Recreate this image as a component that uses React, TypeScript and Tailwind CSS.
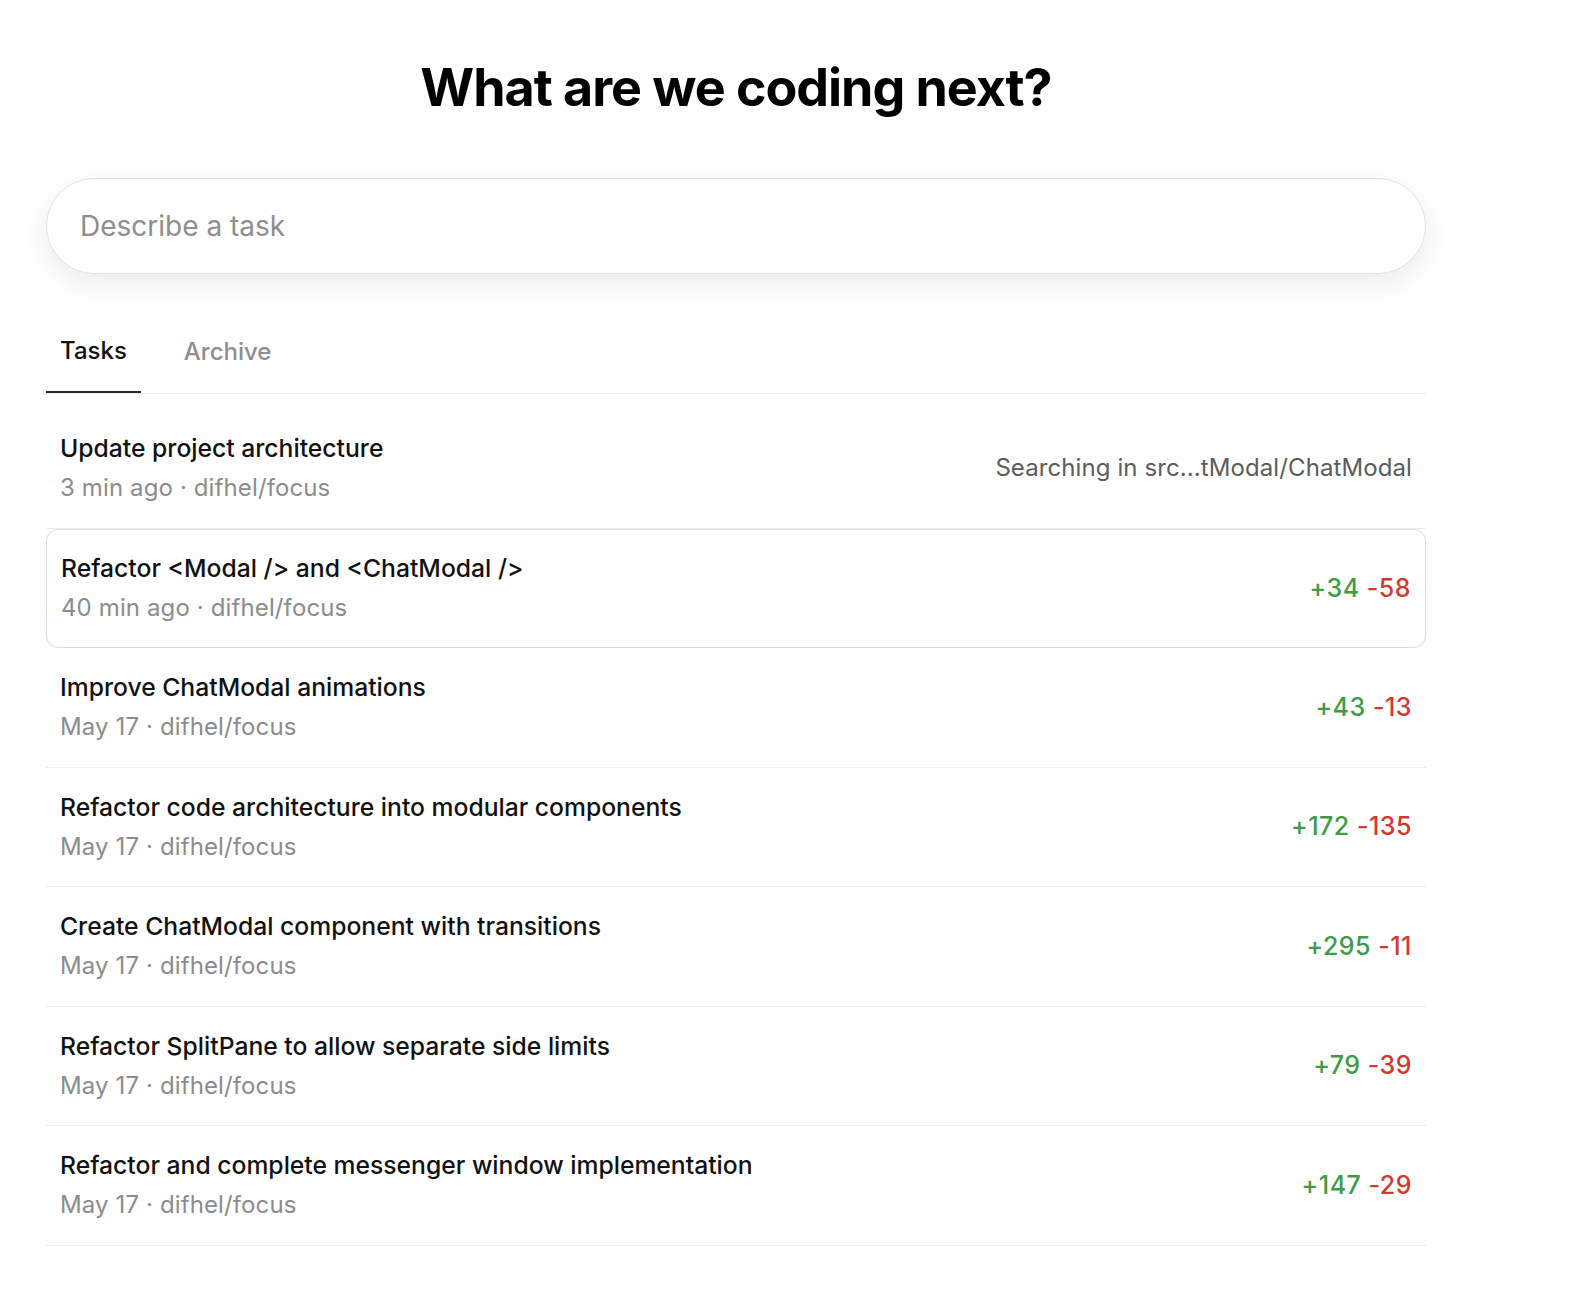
import React from "react";

type Task = {
  title: string;
  when: string;
  repo: string;
  status?: string;
  added?: number;
  removed?: number;
  selected?: boolean;
};

const tasks: Task[] = [
  { title: "Update project architecture", when: "3 min ago", repo: "difhel/focus", status: "Searching in src...tModal/ChatModal" },
  { title: "Refactor <Modal /> and <ChatModal />", when: "40 min ago", repo: "difhel/focus", added: 34, removed: 58, selected: true },
  { title: "Improve ChatModal animations", when: "May 17", repo: "difhel/focus", added: 43, removed: 13 },
  { title: "Refactor code architecture into modular components", when: "May 17", repo: "difhel/focus", added: 172, removed: 135 },
  { title: "Create ChatModal component with transitions", when: "May 17", repo: "difhel/focus", added: 295, removed: 11 },
  { title: "Refactor SplitPane to allow separate side limits", when: "May 17", repo: "difhel/focus", added: 79, removed: 39 },
  { title: "Refactor and complete messenger window implementation", when: "May 17", repo: "difhel/focus", added: 147, removed: 29 },
];

const TaskRow: React.FC<{ task: Task }> = ({ task }) => (
  <div
    className={
      task.selected
        ? "flex items-center justify-between h-[119.5px] px-[14px] rounded-[12px] border border-[#dcdcdc]"
        : "flex items-center justify-between h-[119.5px] px-[14px] border-b border-[#efefef]"
    }
  >
    <div className="flex flex-col gap-[10px]">
      <span className="text-[24.7px] leading-[30px] font-medium text-[#111]">{task.title}</span>
      <span className="text-[24px] leading-[30px] tracking-[0.005em] text-[#8c8c8c]">
        {task.when} · {task.repo}
      </span>
    </div>
    {task.status ? (
      <span className="text-[24px] tracking-[0.004em] text-[#5c5c5c]">{task.status}</span>
    ) : (
      <span className="text-[25px] font-medium tracking-[0.02em]">
        <span className="text-[#3e9b47]">+{task.added}</span>{" "}
        <span className="text-[#d1392f]">-{task.removed}</span>
      </span>
    )}
  </div>
);

export default function App() {
  return (
    <div className="min-h-screen bg-white font-['Inter',sans-serif] antialiased">
      <div className="w-[1380px] ml-[46px] pt-[60px]">
        <h1 className="text-center text-[52px] leading-[56px] font-bold tracking-[-0.02em] text-black">
          What are we coding next?
        </h1>

        <div className="mt-[62px] h-[96px] rounded-full border border-[#e2e2e2] bg-white shadow-[0_10px_28px_rgba(0,0,0,0.08)] flex items-center px-[33px]">
          <input
            className="w-full bg-transparent outline-none text-[28px] text-[#111] placeholder:text-[#8e8e8e]"
            placeholder="Describe a task"
          />
        </div>

        <div className="mt-[37px] flex gap-[28px] border-b border-[#efefef]">
          <button className="h-[82px] px-[14px] -mb-px border-b-2 border-[#2a2a2a] text-[24px] font-medium text-[#111]">
            Tasks
          </button>
          <button className="h-[82px] px-[15px] text-[24px] font-medium text-[#8e8e8e]">Archive</button>
        </div>

        <div className="mt-[15px] flex flex-col">
          {tasks.map((t, i) => (
            <TaskRow key={i} task={t} />
          ))}
        </div>
      </div>
    </div>
  );
}
